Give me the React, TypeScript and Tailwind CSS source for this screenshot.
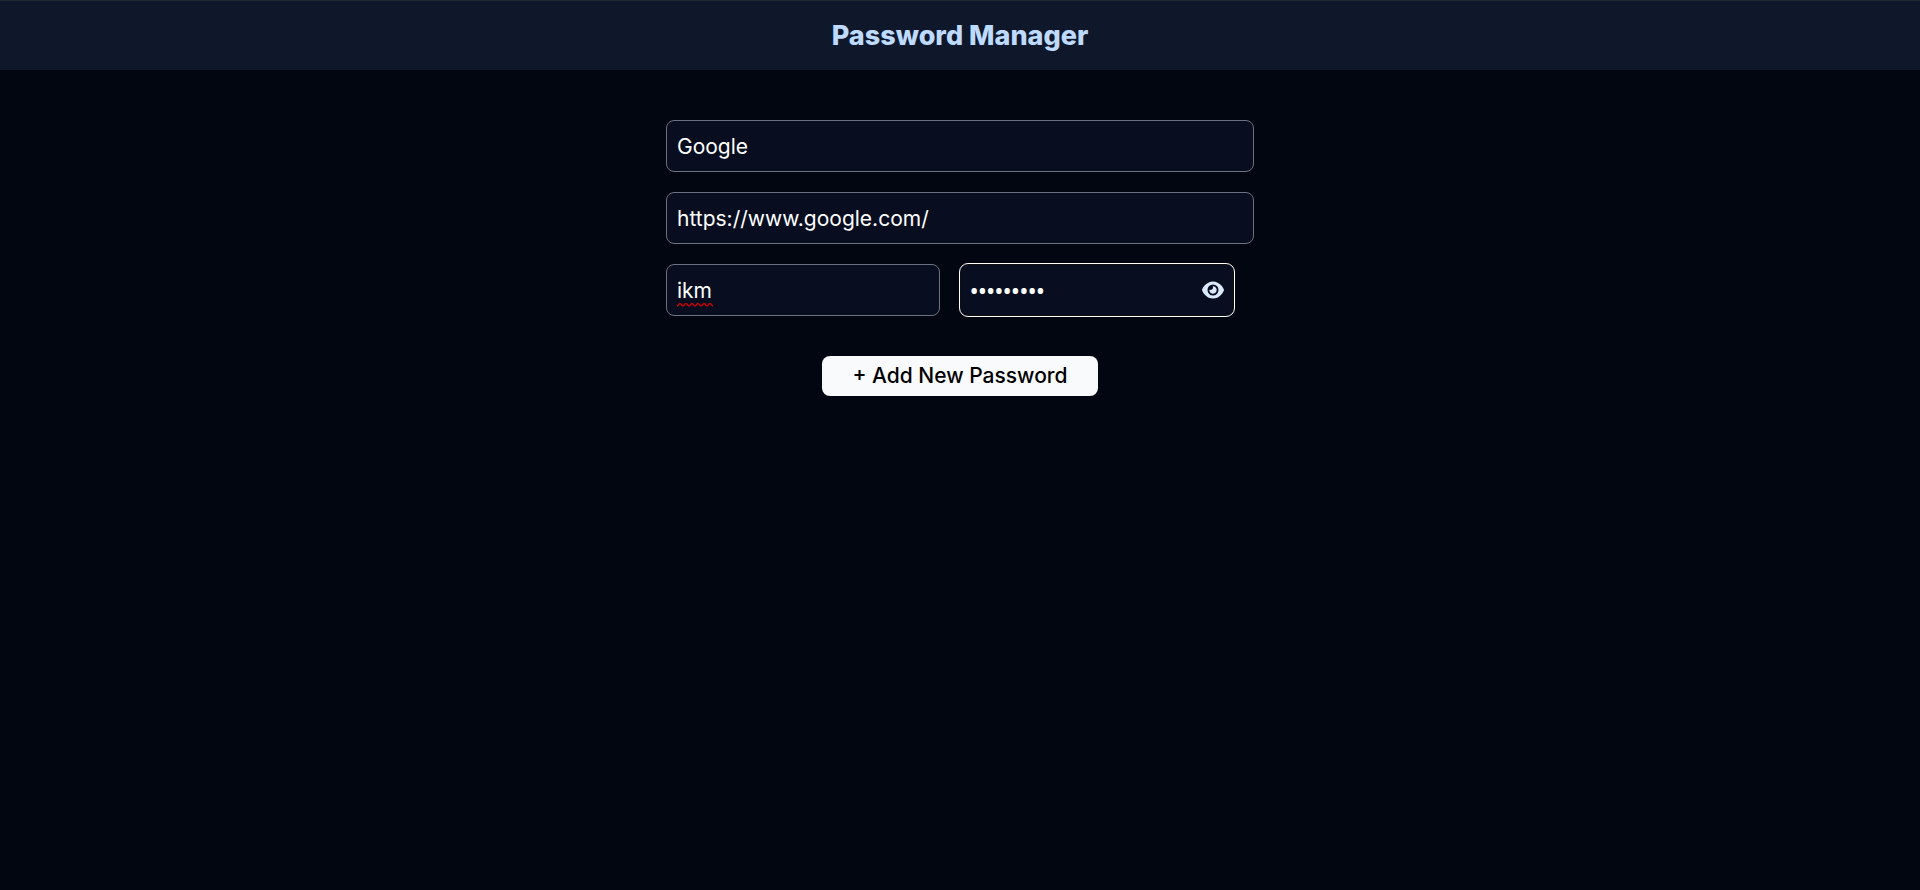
import { useState } from "react";
import { FaEye, FaEyeSlash } from "react-icons/fa6";

const field =
  "h-[52px] w-full rounded-lg border border-gray-500 bg-[#080e20] px-[10px] text-[21px] text-white outline-none";

export default function App() {
  const [visible, setVisible] = useState(false);

  return (
    <div className="min-h-screen bg-[#020610] font-['Inter',sans-serif]">
      <header className="flex h-[70px] items-center justify-center border-t border-[#20292f] bg-[#0f172a]">
        <h1 className="text-[27px] leading-9 font-extrabold text-blue-200">Password Manager</h1>
      </header>
      <main className="mx-auto w-full max-w-[588px] pt-[50px]">
        <form className="flex flex-col gap-5" onSubmit={(e) => e.preventDefault()}>
          <input className={field} aria-label="Site name" defaultValue="Google" />
          <input className={field} aria-label="Site URL" defaultValue="https://www.google.com/" />
          <div className="grid grid-cols-2 gap-5 pr-5">
            <div className="relative">
              <input
                className={field}
                aria-label="Username"
                defaultValue="ikm"
                spellCheck={false}
              />
              <svg
                className="pointer-events-none absolute bottom-[9px] left-[11px]"
                width="36"
                height="5"
                viewBox="0 0 36 5"
                fill="none"
                stroke="#d50000"
                strokeWidth="1.4"
                aria-hidden="true"
              >
                <path d="M0 3.8c1.5 0 1.5-2.4 3-2.4s1.5 2.4 3 2.4 1.5-2.4 3-2.4 1.5 2.4 3 2.4 1.5-2.4 3-2.4 1.5 2.4 3 2.4 1.5-2.4 3-2.4 1.5 2.4 3 2.4 1.5-2.4 3-2.4 1.5 2.4 3 2.4 1.5-2.4 3-2.4 1.5 2.4 3 2.4" />
              </svg>
            </div>
            <div className="flex h-[52px] items-center rounded-lg border border-[#101010] bg-[#080e20] px-[9px] outline outline-white">
              <input
                className={
                  visible
                    ? "w-full min-w-0 bg-transparent text-[21px] text-white outline-none"
                    : "w-full min-w-0 bg-transparent font-['Open_Sans',sans-serif] text-[22px] font-semibold text-white outline-none"
                }
                aria-label="Password"
                type={visible ? "text" : "password"}
                defaultValue="google123"
              />
              <button
                type="button"
                aria-label="Show or hide password"
                onClick={() => setVisible(!visible)}
                className="shrink-0 text-[22px] text-blue-100"
              >
                {visible ? <FaEyeSlash /> : <FaEye />}
              </button>
            </div>
          </div>
          <button
            type="submit"
            className="mt-5 h-10 w-[276px] self-center rounded-lg bg-slate-50 text-[21px] font-medium text-black"
          >
            + Add New Password
          </button>
        </form>
      </main>
    </div>
  );
}
